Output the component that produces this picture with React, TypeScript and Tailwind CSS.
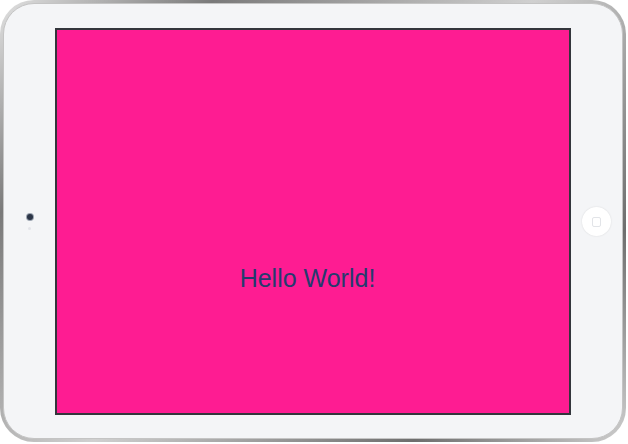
import React from "react";

export default function App() {
  return (
    <div className="w-[628px] h-[444px] bg-white">
      <div className="w-[626px] h-[442px] rounded-[34px] p-[3px] bg-[linear-gradient(135deg,#e2e2e2_0%,#7a7a7a_20%,#d0d0d0_50%,#6e6e6e_80%,#cfcfcf_100%)]">
        <div className="w-full h-full rounded-[31px] bg-[#f4f5f7] border border-[#c4c4c4] flex items-center">
          <div className="w-[51px] h-full flex flex-col items-center justify-center">
            <div className="w-[6px] h-[6px] rounded-full bg-[#2b3547] ring-1 ring-[#9aa3b0] mt-[2px]" />
            <div className="w-[3px] h-[3px] rounded-full bg-[#e3e5e9] mt-[7px]" />
          </div>
          <div className="w-[516px] h-[387px] border-2 border-[#33363c] bg-[#fe1c92] flex justify-center pt-[234px] pr-[11px]">
            <span className="text-[25px] leading-[1.149] text-[#253b6d] font-['Liberation_Sans',Arial,sans-serif] h-fit">
              Hello World!
            </span>
          </div>
          <div className="w-[51px] h-full flex items-center justify-center">
            <div className="w-[29px] h-[29px] rounded-full bg-white shadow-[0_0_2px_rgba(0,0,0,0.12)] flex items-center justify-center ml-[-1px] mt-[1px]">
              <div className="w-[9px] h-[10px] rounded-[2px] border border-[#e2e4e8]" />
            </div>
          </div>
        </div>
      </div>
    </div>
  );
}
